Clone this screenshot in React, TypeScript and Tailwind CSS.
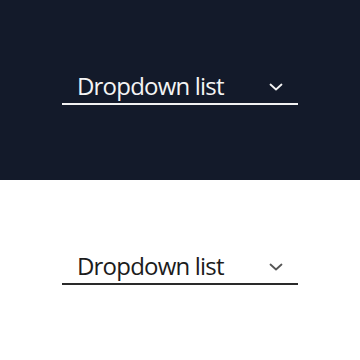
function Chevron({ color }: { color: string }) {
  return (
    <svg width="14" height="8" viewBox="0 0 14 8" fill="none" className="mb-[-2px]">
      <polyline points="1.5,1.5 7,6.5 12.5,1.5" stroke={color} strokeWidth="1.8" strokeLinecap="round" strokeLinejoin="round" />
    </svg>
  );
}

function Dropdown({ dark }: { dark: boolean }) {
  return (
    <div className={`flex h-[180px] justify-center pt-[69px] ${dark ? "bg-[#131a2a]" : "bg-white"}`}>
      <div
        className={`flex h-[36px] w-[236px] items-center justify-between border-b-2 pl-[15px] pr-[15px] ${
          dark ? "border-[#f2f2f2]" : "border-[#2a2a2a]"
        }`}
      >
        <span
          className={`text-[24px] leading-none tracking-[-0.8px] ${dark ? "text-[#f4f4f4]" : "text-[#1c1c1c]"}`}
          style={{ fontFamily: '"Open Sans", sans-serif' }}
        >
          Dropdown list
        </span>
        <Chevron color={dark ? "#f4f4f4" : "#555555"} />
      </div>
    </div>
  );
}

export default function App() {
  return (
    <div className="h-[360px] w-[360px]">
      <Dropdown dark />
      <Dropdown dark={false} />
    </div>
  );
}
